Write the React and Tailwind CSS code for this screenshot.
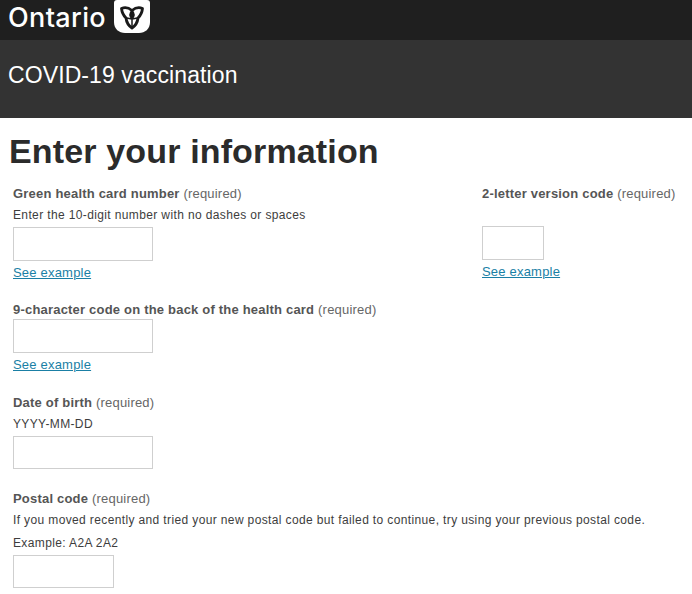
export default function App() {
  const Req = () => <span className="font-normal text-[#666]"> (required)</span>;
  const Label = ({ children }) => (
    <div className="text-[13px] leading-[16px] font-bold text-[#555] tracking-[0.2px]">{children}<Req /></div>
  );
  const Hint = ({ children, cls }) => <div className={"text-[12px] leading-[16px] text-[#3d3d3d] tracking-[0.37px] " + cls}>{children}</div>;
  const Input = ({ cls }) => <div className={"border border-[#cfcfcf] bg-white " + cls}></div>;
  const Ex = ({ cls }) => <a className={"block text-[13px] leading-[16px] text-[#1a7fa5] underline tracking-[0.2px] " + cls}>See example</a>;
  return (
    <div className="w-[692px] h-[594px] overflow-hidden bg-white font-['Liberation_Sans',Arial,sans-serif]">
      <div className="h-[40px] bg-[#1f1f1f] flex items-start pl-[8px]">
        <span className="text-white text-[27px] leading-[36px] font-['Inter',sans-serif] font-medium tracking-[0.35px]">Ontario</span>
        <svg className="ml-[8px]" width="36" height="33" viewBox="0 0 36 33">
          <path d="M3 0H33C35 0 36 1 36 3V22C36 29 31 33 25 33H11C5 33 0 29 0 22V3C0 1 1 0 3 0Z" fill="#fff" />
          <path d="M7.5 8.500C11 7 15 8 18 10.500C21 8 25 7 28.500 8.500C28 13 26 16 24 18C23.500 22.500 21 26 18 28C15 26 12.500 22.500 12 18C10 16 8 13 7.500 8.500Z" fill="none" stroke="#1a1a1a" strokeWidth="2.800" strokeLinejoin="round" />
          <path d="M18 10.500C15.500 13 15 15.500 18 19C21 15.500 20.500 13 18 10.500ZM18 19V27M18 19L12.500 18M18 19L23.500 18" fill="#1a1a1a" stroke="#1a1a1a" strokeWidth="1.500" />
        </svg>
      </div>
      <div className="h-[78px] bg-[#333333] pl-[8px] pt-[21px]">
        <div className="text-white text-[23px] leading-[28px] tracking-[0.1px]">COVID-19 vaccination</div>
      </div>
      <h1 className="pl-[9px] pt-[13px] text-[34px] leading-[40px] font-bold text-[#2b2b2b] tracking-[0.15px]">Enter your information</h1>
      <div className="pl-[13px] pt-[15px]">
        <div className="flex">
          <div className="w-[469px]">
            <Label>Green health card number</Label>
            <Hint cls="mt-[5px]">Enter the 10-digit number with no dashes or spaces</Hint>
            <Input cls="mt-[4px] w-[140px] h-[34px]" />
            <Ex cls="mt-[4px]" />
          </div>
          <div>
            <Label>2-letter version code</Label>
            <Input cls="mt-[24px] w-[62px] h-[34px]" />
            <Ex cls="mt-[4px]" />
          </div>
        </div>
        <div className="mt-[21px]">
          <Label>9-character code on the back of the health card</Label>
          <Input cls="mt-[1px] w-[140px] h-[34px]" />
          <Ex cls="mt-[4px]" />
        </div>
        <div className="mt-[22px]">
          <Label>Date of birth</Label>
          <Hint cls="mt-[5px]">YYYY-MM-DD</Hint>
          <Input cls="mt-[4px] w-[140px] h-[33px]" />
        </div>
        <div className="mt-[22px]">
          <Label>Postal code</Label>
          <Hint cls="mt-[5px]">If you moved recently and tried your new postal code but failed to continue, try using your previous postal code.</Hint>
          <Hint cls="mt-[7px]">Example: A2A 2A2</Hint>
          <Input cls="mt-[4px] w-[101px] h-[33px]" />
        </div>
      </div>
    </div>
  );
}
